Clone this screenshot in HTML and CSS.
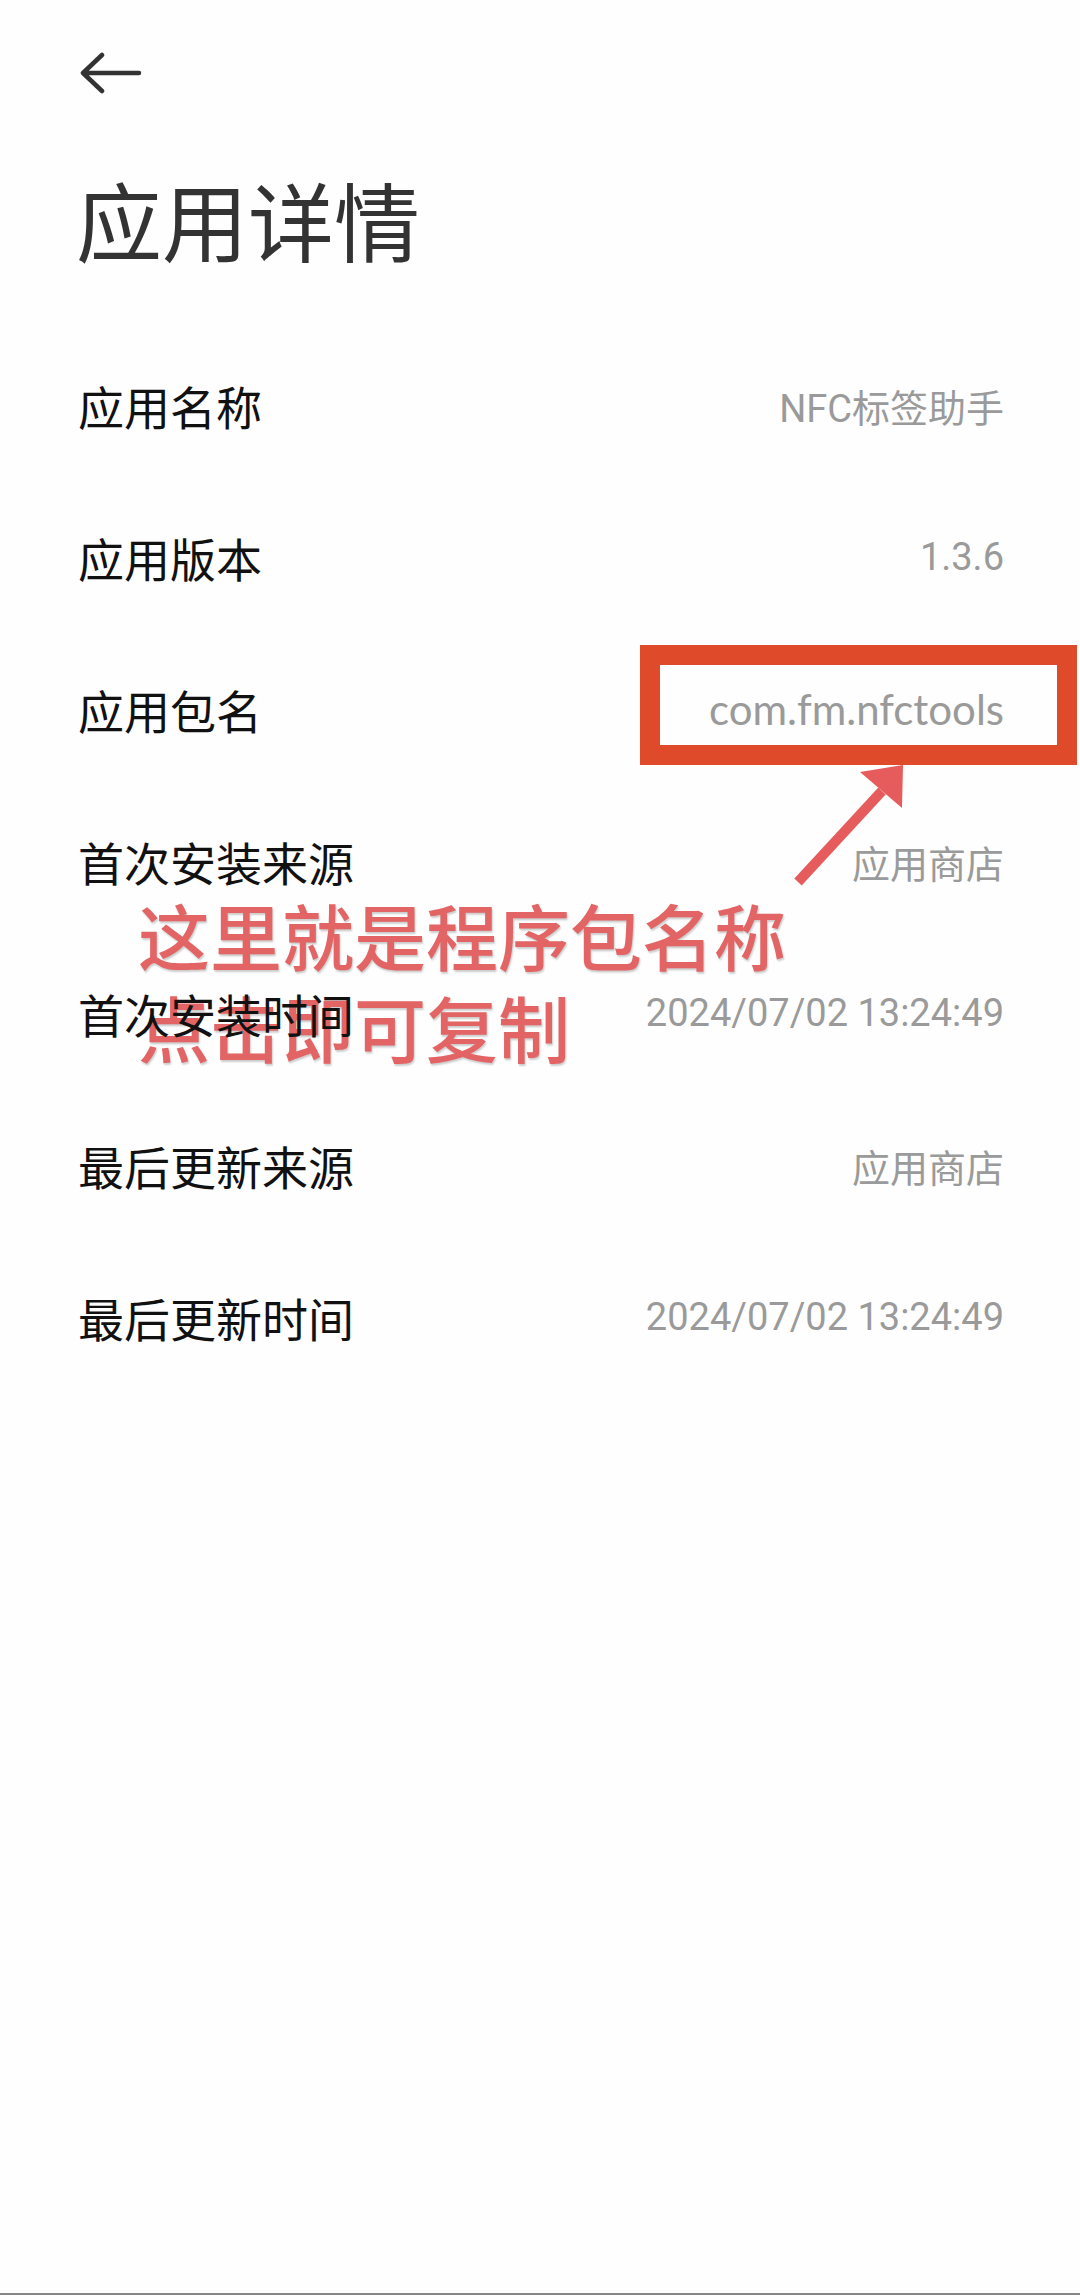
FILE: index.html
```html
<!DOCTYPE html>
<html lang="zh-CN">
<head>
  <meta charset="UTF-8" />
  <meta name="viewport" content="width=device-width, initial-scale=1.0">
  <title>应用详情</title>
  <link rel="stylesheet" href="styles.css">
</head>
<body>

  <div class="page">

    <!-- 返回 -->
    <div class="topbar">
      <svg class="back" viewBox="0 0 64 44" width="64" height="44">
        <path d="M61 21H5M24 3L5 21L24 39" />
      </svg>
    </div>

    <h1 class="title">应用详情</h1>

    <!-- 信息列表 -->
    <div class="info-list">
      <div class="row">
        <span class="label">应用名称</span>
        <span class="value">NFC标签助手</span>
      </div>
      <div class="row">
        <span class="label">应用版本</span>
        <span class="value">1.3.6</span>
      </div>
      <div class="row">
        <span class="label">应用包名</span>
        <span class="value pkg">com.fm.nfctools</span>
        <div class="mark-box"></div>
        <svg class="mark-arrow" viewBox="0 0 120 132" width="120" height="132">
          <path class="shaft" d="M8 124L92 33" />
          <path class="head" d="M113 7L70 14L112 50Z" />
        </svg>
      </div>
      <div class="row">
        <span class="label">首次安装来源</span>
        <span class="value">应用商店</span>
      </div>
      <div class="row">
        <span class="label">首次安装时间</span>
        <span class="value">2024/07/02 13:24:49</span>
      </div>
      <div class="row">
        <span class="label">最后更新来源</span>
        <span class="value">应用商店</span>
      </div>
      <div class="row">
        <span class="label">最后更新时间</span>
        <span class="value">2024/07/02 13:24:49</span>
      </div>

      <!-- 标注文字 -->
      <div class="note">
        <div>这里就是程序包名称</div>
        <div>点击即可复制</div>
      </div>
    </div>

  </div>

</body>
</html>
```

FILE: styles.css
```css
body {
  margin: 0;
  background-color: #fefefe;
  font-family: Roboto, "Noto Sans CJK SC", sans-serif;
}

.page {
  height: 2295px;
  box-sizing: border-box;
  border-bottom: 2px solid #888;
}

.topbar {
  padding: 52px 0 0 78px;
  height: 44px;
}

.back {
  display: block;
  fill: none;
  stroke: #333;
  stroke-width: 4.5;
  stroke-linecap: round;
  stroke-linejoin: round;
}

.title {
  margin: 80px 0 0 0;
  padding-left: 76px;
  font-family: "Noto Sans CJK SC", sans-serif;
  font-size: 86px;
  font-weight: 400;
  line-height: 86px;
  color: #333;
}

.info-list {
  position: relative;
  margin-top: 67px;
}

.row {
  position: relative;
  display: flex;
  justify-content: space-between;
  align-items: center;
  height: 152px;
  padding: 0 76px 0 78px;
}

.label {
  position: relative;
  z-index: 2;
  font-family: "Noto Sans CJK SC", sans-serif;
  font-size: 46px;
  color: #111;
}

.value {
  font-size: 38px;
  color: #9a9a9a;
}

.pkg {
  font-family: Lato, "Noto Sans CJK SC", sans-serif;
  font-size: 42px;
}

/* 标注：红框 + 箭头 */
.mark-box {
  position: absolute;
  top: 12px;
  right: 3px;
  width: 437px;
  height: 120px;
  box-sizing: border-box;
  border: 20px solid #df4a2b;
}

.mark-arrow {
  position: absolute;
  left: 790px;
  top: 125px;
  z-index: 3;
}

.mark-arrow .shaft {
  stroke: #e65c5c;
  stroke-width: 10;
  fill: none;
}

.mark-arrow .head {
  fill: #e65c5c;
}

.note {
  position: absolute;
  left: 138px;
  top: 559px;
  z-index: 1;
  font-family: "Noto Sans CJK SC", sans-serif;
  font-size: 72px;
  font-weight: 500;
  line-height: 92px;
  color: #e36464;
  text-shadow: 1px 2px 2px rgba(0, 0, 0, 0.2);
}
```
